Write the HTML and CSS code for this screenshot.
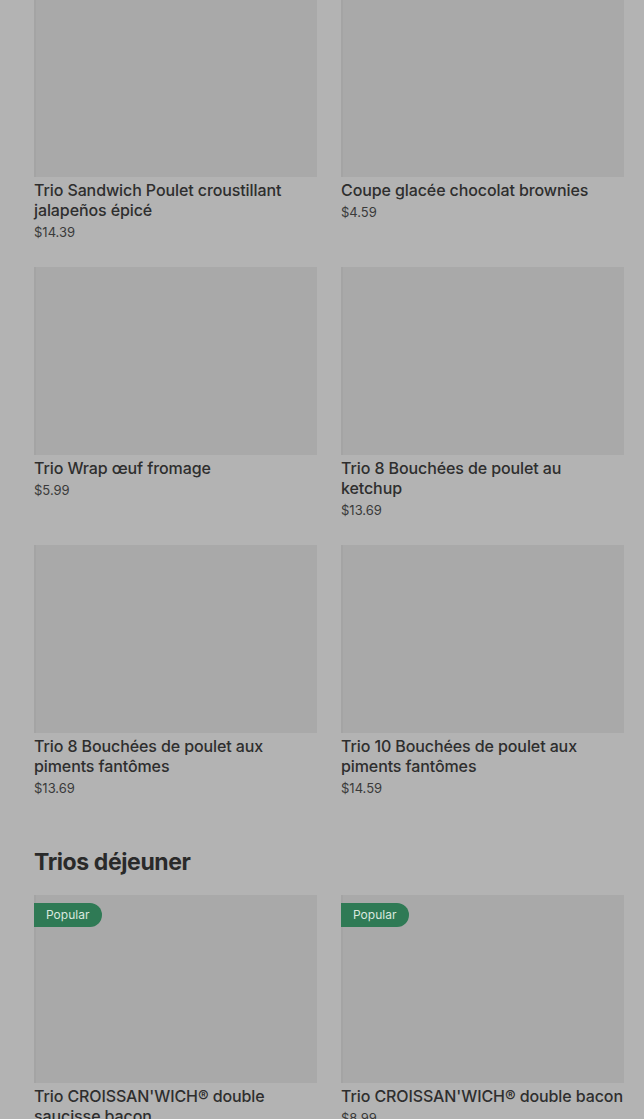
FILE: index.html
```html
<!DOCTYPE html>
<html lang="fr">
<head>
<meta charset="utf-8">
<link rel="stylesheet" href="styles.css">
</head>
<body>
<main class="page">
  <div class="grid first">
    <div class="card"><div class="img"></div><div class="title">Trio Sandwich Poulet croustillant jalapeños épicé</div><div class="price">$14.39</div></div>
    <div class="card"><div class="img"></div><div class="title">Coupe glacée chocolat brownies</div><div class="price">$4.59</div></div>
    <div class="card"><div class="img"></div><div class="title">Trio Wrap œuf fromage</div><div class="price">$5.99</div></div>
    <div class="card"><div class="img"></div><div class="title">Trio 8 Bouchées de poulet au ketchup</div><div class="price">$13.69</div></div>
    <div class="card"><div class="img"></div><div class="title">Trio 8 Bouchées de poulet aux piments fantômes</div><div class="price">$13.69</div></div>
    <div class="card"><div class="img"></div><div class="title">Trio 10 Bouchées de poulet aux piments fantômes</div><div class="price">$14.59</div></div>
  </div>
  <h2 class="section-title">Trios déjeuner</h2>
  <div class="grid">
    <div class="card"><div class="img"><span class="badge">Popular</span></div><div class="title">Trio CROISSAN'WICH® double saucisse bacon</div><div class="price">$9.49</div></div>
    <div class="card"><div class="img"><span class="badge">Popular</span></div><div class="title">Trio CROISSAN'WICH® double bacon</div><div class="price">$8.99</div></div>
  </div>
</main>
</body>
</html>
```
FILE: styles.css
```css
html, body {
  margin: 0;
  padding: 0;
  background: #b3b3b3;
  overflow: hidden;
}
body {
  font-family: Inter, "Liberation Sans", sans-serif;
  color: #2f2f2f;
}
.page {
  padding: 0 20px 0 34px;
}
.grid {
  display: grid;
  grid-template-columns: 283px 283px;
  column-gap: 24px;
  row-gap: 23px;
}
.grid.first {
  margin-top: -11px;
}
.card {
  display: flex;
  flex-direction: column;
}
.img {
  position: relative;
  height: 188px;
  background: #a9a9a9;
  box-shadow: inset 6px 0 0 -4px #a4a4a4;
}
.title {
  margin-top: 3px;
  font-size: 16px;
  line-height: 20px;
  font-weight: 500;
  color: #2e2e2e;
  letter-spacing: -0.1px;
}
.price {
  font-size: 13px;
  line-height: 24px;
  color: #3a3a3a;
}
.section-title {
  margin: 46px 0 17px;
  font-size: 23px;
  line-height: 32px;
  font-weight: 700;
  letter-spacing: -0.4px;
  color: #2a2a2a;
}
.badge {
  position: absolute;
  left: 0;
  top: 8px;
  height: 24px;
  line-height: 24px;
  padding: 0 13px 0 12px;
  font-size: 12px;
  color: #d9e8df;
  background: #2f7a55;
  border-radius: 0 12px 12px 0;
}
```
